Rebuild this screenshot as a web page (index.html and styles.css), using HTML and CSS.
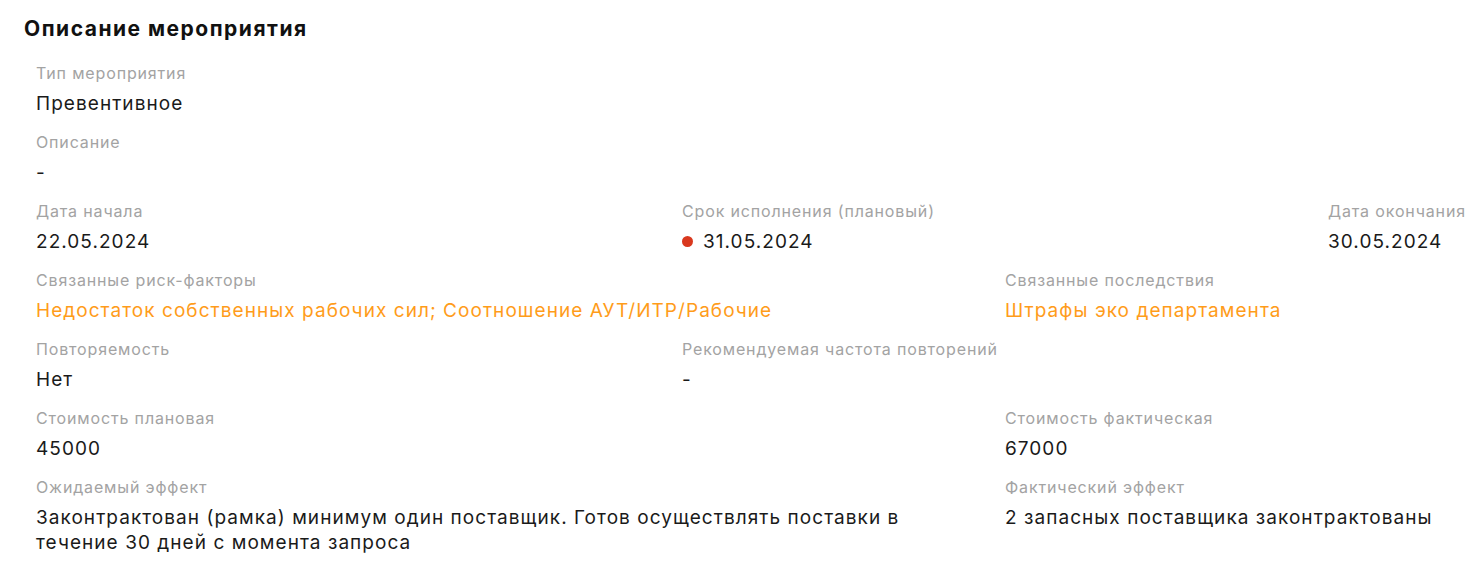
FILE: index.html
```html
<!DOCTYPE html>
<html lang="ru">
<head>
    <meta charset="UTF-8">
    <meta name="viewport" content="width=device-width, initial-scale=1.0">
    <title>Описание мероприятия</title>
    <link rel="stylesheet" href="styles.css">
</head>
<body>
    <section class="event-card">
        <h2 class="event-title">Описание мероприятия</h2>

        <div class="field-grid">
            <div class="field span-all">
                <div class="field-label">Тип мероприятия</div>
                <div class="field-value">Превентивное</div>
            </div>

            <div class="field span-all">
                <div class="field-label">Описание</div>
                <div class="field-value">-</div>
            </div>

            <div class="field span-2">
                <div class="field-label">Дата начала</div>
                <div class="field-value">22.05.2024</div>
            </div>
            <div class="field span-2">
                <div class="field-label">Срок исполнения (плановый)</div>
                <div class="field-value"><span class="status-dot"></span>31.05.2024</div>
            </div>
            <div class="field">
                <div class="field-label">Дата окончания</div>
                <div class="field-value">30.05.2024</div>
            </div>

            <div class="field span-3">
                <div class="field-label">Связанные риск-факторы</div>
                <div class="field-value link">Недостаток собственных рабочих сил; Соотношение АУТ/ИТР/Рабочие</div>
            </div>
            <div class="field span-2">
                <div class="field-label">Связанные последствия</div>
                <div class="field-value link">Штрафы эко департамента</div>
            </div>

            <div class="field span-2">
                <div class="field-label">Повторяемость</div>
                <div class="field-value">Нет</div>
            </div>
            <div class="field span-3">
                <div class="field-label">Рекомендуемая частота повторений</div>
                <div class="field-value">-</div>
            </div>

            <div class="field span-3">
                <div class="field-label">Стоимость плановая</div>
                <div class="field-value">45000</div>
            </div>
            <div class="field span-2">
                <div class="field-label">Стоимость фактическая</div>
                <div class="field-value">67000</div>
            </div>

            <div class="field span-3">
                <div class="field-label">Ожидаемый эффект</div>
                <div class="field-value">Законтрактован (рамка) минимум один поставщик. Готов осуществлять поставки в течение 30 дней с момента запроса</div>
            </div>
            <div class="field span-2">
                <div class="field-label">Фактический эффект</div>
                <div class="field-value">2 запасных поставщика законтрактованы</div>
            </div>
        </div>
    </section>
</body>
</html>
```

FILE: styles.css
```css
body {
    font-family: 'Inter', 'Noto Sans', sans-serif;
    margin: 0;
    background-color: #ffffff;
    color: #1a1a1a;
    overflow: hidden;
}

.event-card {
    padding: 17px 0 0 24px;
}

.event-title {
    font-size: 21px;
    line-height: 24px;
    font-weight: 700;
    letter-spacing: 1.5px;
    color: #111111;
    margin: 0 0 22px 0;
}

.field-grid {
    display: grid;
    grid-template-columns: repeat(4, 323px) minmax(0, 1fr);
    row-gap: 16px;
    padding-left: 12px;
}

.field {
    min-width: 0;
}

.span-2 {
    grid-column: span 2;
}

.span-3 {
    grid-column: span 3;
    padding-right: 48px;
}

.span-all {
    grid-column: 1 / -1;
}

.field-label {
    font-size: 16px;
    line-height: 20px;
    letter-spacing: 0.85px;
    color: #a3a3a3;
    white-space: nowrap;
    margin-bottom: 8px;
}

.field-value {
    font-size: 19px;
    line-height: 25px;
    letter-spacing: 1.05px;
    color: #1a1a1a;
    display: flex;
    align-items: center;
}

.field-value.link {
    color: #ff9c1a;
}

.status-dot {
    width: 11px;
    height: 11px;
    border-radius: 50%;
    background-color: #d9381e;
    margin-right: 10px;
    flex-shrink: 0;
}
```
